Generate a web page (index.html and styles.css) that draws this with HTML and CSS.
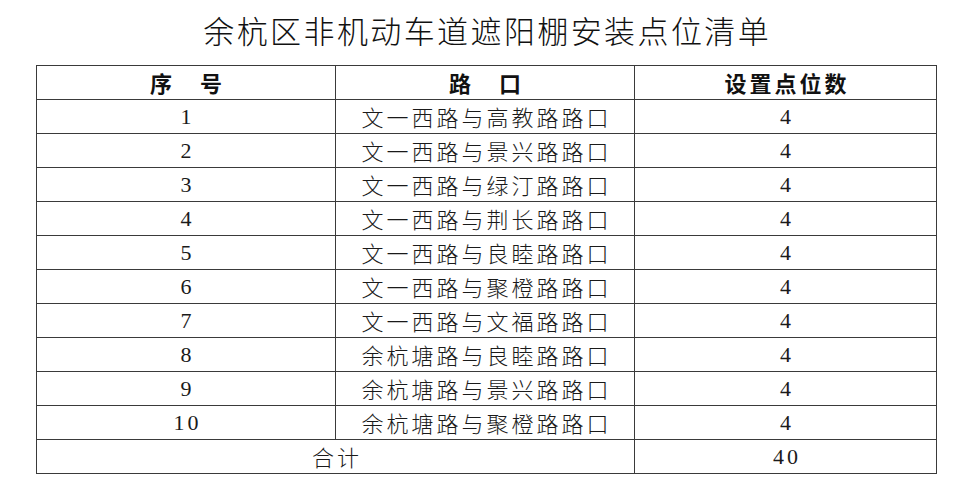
FILE: index.html
```html
<!DOCTYPE html>
<html lang="zh-CN">
<head>
<meta charset="utf-8">
<title>余杭区非机动车道遮阳棚安装点位清单</title>
<link rel="stylesheet" href="styles.css">
</head>
<body>
<div class="page">
  <h1 class="title">余杭区非机动车道遮阳棚安装点位清单</h1>
  <table class="list">
    <colgroup>
      <col class="c1"><col class="c2"><col class="c3">
    </colgroup>
    <thead>
      <tr><th>序　号</th><th>路　口</th><th>设置点位数</th></tr>
    </thead>
    <tbody>
      <tr><td class="num">1</td><td>文一西路与高教路路口</td><td class="num">4</td></tr>
      <tr><td class="num">2</td><td>文一西路与景兴路路口</td><td class="num">4</td></tr>
      <tr><td class="num">3</td><td>文一西路与绿汀路路口</td><td class="num">4</td></tr>
      <tr><td class="num">4</td><td>文一西路与荆长路路口</td><td class="num">4</td></tr>
      <tr><td class="num">5</td><td>文一西路与良睦路路口</td><td class="num">4</td></tr>
      <tr><td class="num">6</td><td>文一西路与聚橙路路口</td><td class="num">4</td></tr>
      <tr><td class="num">7</td><td>文一西路与文福路路口</td><td class="num">4</td></tr>
      <tr><td class="num">8</td><td>余杭塘路与良睦路路口</td><td class="num">4</td></tr>
      <tr><td class="num">9</td><td>余杭塘路与景兴路路口</td><td class="num">4</td></tr>
      <tr><td class="num">10</td><td>余杭塘路与聚橙路路口</td><td class="num">4</td></tr>
      <tr><td colspan="2">合计</td><td class="num">40</td></tr>
    </tbody>
  </table>
</div>
</body>
</html>
```
FILE: styles.css
```css
html, body {
  margin: 0;
  padding: 0;
  background: #ffffff;
}
body {
  font-family: "Noto Sans CJK SC", "Liberation Serif", serif;
  color: #1a1a1a;
}
.page {
  width: 900px;
  margin-left: 36px;
}
.title {
  margin: 0;
  height: 65px;
  line-height: 60px;
  text-align: center;
  font-size: 31px;
  font-weight: 300;
  letter-spacing: 2.4px;
  padding-left: 2.4px;
  color: #111;
}
.list {
  width: 900px;
  border-collapse: collapse;
  table-layout: fixed;
}
.list col.c1 { width: 299px; }
.list col.c2 { width: 299px; }
.list col.c3 { width: 302px; }
.list th,
.list td {
  border: 1px solid #3a3a3a;
  height: 33px;
  padding: 0 0 0 3px;
  text-align: center;
  vertical-align: middle;
  font-size: 22px;
  line-height: 33px;
  letter-spacing: 3px;
  font-weight: 300;
}
.list th {
  font-weight: 700;
  color: #111;
}
.list td.num {
  font-family: "Liberation Serif", serif;
  font-weight: 400;
  font-size: 22px;
}
```
